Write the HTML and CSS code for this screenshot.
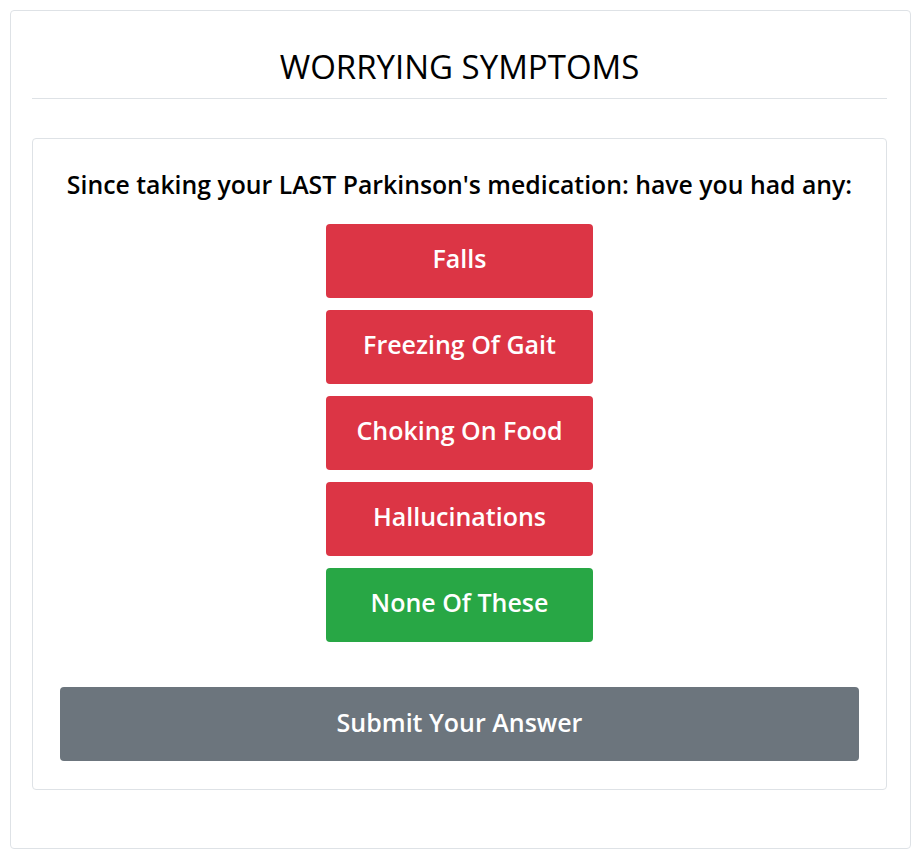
FILE: index.html
```html
<!DOCTYPE html>
<html lang="en">
<head>
<meta charset="utf-8">
<title>Worrying Symptoms</title>
<link rel="stylesheet" href="styles.css">
</head>
<body>
  <div class="outer-card">
    <div class="header">
      <h1 class="title">WORRYING SYMPTOMS</h1>
    </div>
    <div class="inner-card">
      <p class="question">Since taking your LAST Parkinson's medication: have you had any:</p>
      <div class="options">
        <button class="btn btn-red">Falls</button>
        <button class="btn btn-red">Freezing Of Gait</button>
        <button class="btn btn-red">Choking On Food</button>
        <button class="btn btn-red">Hallucinations</button>
        <button class="btn btn-green">None Of These</button>
      </div>
      <button class="btn btn-submit">Submit Your Answer</button>
    </div>
  </div>
</body>
</html>
```
FILE: styles.css
```css
* { box-sizing: border-box; }
html, body { background: #fff; }
body {
  margin: 10px;
  font-family: "Open Sans", "Noto Sans", sans-serif;
  color: #000;
}
.outer-card {
  width: 901px;
  height: 839px;
  border: 1px solid #dee2e6;
  border-radius: 4px;
  padding: 37px 23px 0 21px;
}
.header {
  border-bottom: 1px solid #dee2e6;
  padding-bottom: 12px;
}
.title {
  margin: 0;
  text-align: center;
  font-size: 33px;
  font-weight: 400;
  line-height: 38px;
}
.inner-card {
  margin-top: 39px;
  border: 1px solid #dee2e6;
  border-radius: 4px;
  padding: 30px 27px 28px 27px;
  display: flex;
  flex-direction: column;
  align-items: center;
}
.question {
  margin: 0;
  font-size: 24.8px;
  font-weight: 600;
  line-height: 30px;
  text-align: center;
  white-space: nowrap;
}
.options {
  margin-top: 25px;
  display: flex;
  flex-direction: column;
  gap: 12px;
}
.btn {
  border: none;
  border-radius: 4px;
  color: #fff;
  font-family: "Open Sans", "Noto Sans", sans-serif;
  font-size: 25px;
  font-weight: 600;
  line-height: 30px;
  height: 74px;
  padding: 0 0 7px 0;
  cursor: pointer;
}
.btn-red, .btn-green { width: 267px; }
.btn-red { background: #dc3545; }
.btn-green { background: #28a745; }
.btn-submit {
  margin-top: 45px;
  width: 100%;
  background: #6c757d;
  padding: 0 0 5px 0;
}
```
